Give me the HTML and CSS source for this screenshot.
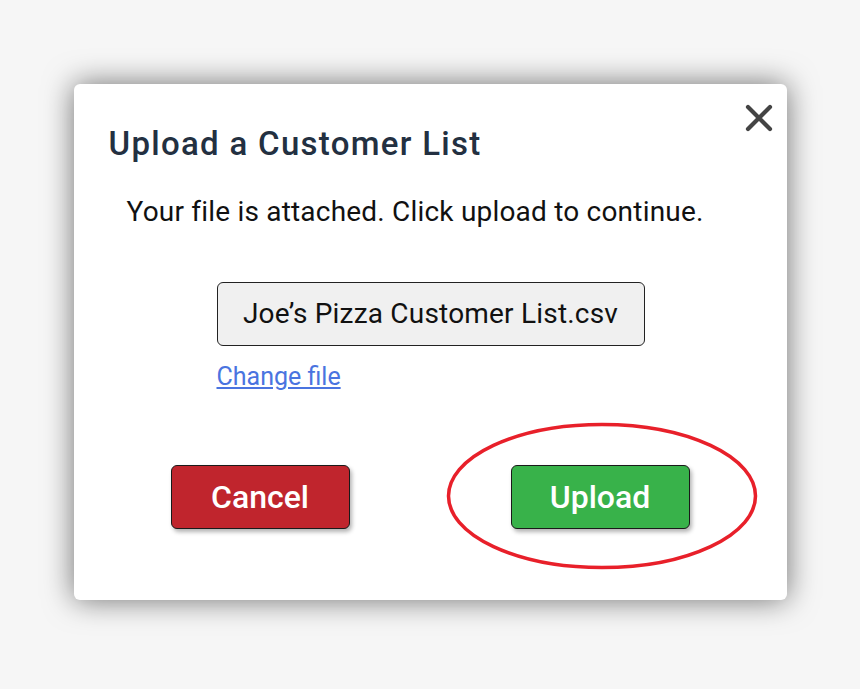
FILE: index.html
```html
<!DOCTYPE html>
<html lang="en">
<head>
    <meta charset="UTF-8">
    <meta name="viewport" content="width=device-width, initial-scale=1.0">
    <title>Upload a Customer List</title>
    <link rel="stylesheet" href="styles.css">
</head>
<body>
    <div class="dialog">
        <button class="close" aria-label="Close">
            <svg width="28" height="28" viewBox="0 0 28 28">
                <path d="M3 3 L25 25 M25 3 L3 25" stroke="#444" stroke-width="4.2" stroke-linecap="round"/>
            </svg>
        </button>

        <h1>Upload a Customer List</h1>
        <p class="message">Your file is attached. Click upload to continue.</p>

        <div class="file-area">
            <div class="file-name">Joe’s Pizza Customer List.csv</div>
            <a href="#" class="change-file">Change file</a>
        </div>

        <div class="actions">
            <button class="btn cancel">Cancel</button>
            <div class="highlight">
                <button class="btn upload">Upload</button>
                <svg class="ring" width="314" height="150" viewBox="0 0 314 150">
                    <ellipse cx="157" cy="75" rx="153.5" ry="71.5" fill="none" stroke="#e8202a" stroke-width="3.5"/>
                </svg>
            </div>
        </div>
    </div>
</body>
</html>
```

FILE: styles.css
```css
body {
    font-family: Roboto, "Noto Sans", sans-serif;
    background-color: #f6f6f6;
    margin: 0;
    padding: 0;
    display: flex;
    align-items: center;
    justify-content: center;
    min-height: 100vh;
}

.dialog {
    position: relative;
    box-sizing: border-box;
    width: 713px;
    height: 516px;
    margin-top: -5px;
    background-color: white;
    border-radius: 6px;
    box-shadow: 0 0 30px rgba(0, 0, 0, 0.55);
    padding: 38px 0 0 35px;
}

.close {
    position: absolute;
    top: 20px;
    right: 14px;
    background: none;
    border: none;
    padding: 0;
    cursor: pointer;
}

h1 {
    margin: 0;
    font-size: 33px;
    font-weight: 500;
    line-height: 44px;
    letter-spacing: 1.3px;
    color: #233041;
}

.message {
    margin: 28px 0 0 18px;
    font-size: 28px;
    line-height: 36px;
    letter-spacing: 0.2px;
    color: #111;
}

.file-area {
    margin: 52px 0 0 108px;
    width: 428px;
}

.file-name {
    box-sizing: border-box;
    height: 64px;
    background-color: #f0f0f0;
    border: 1.5px solid #222;
    border-radius: 6px;
    font-size: 28px;
    line-height: 61px;
    letter-spacing: 0.2px;
    text-align: center;
    color: #111;
}

.change-file {
    display: block;
    width: fit-content;
    margin-top: 16px;
    font-size: 25px;
    line-height: 30px;
    color: #4a74e0;
}

.actions {
    display: flex;
    align-items: center;
    margin: 73px 0 0 62px;
}

.btn {
    width: 179px;
    height: 64px;
    border: 1.5px solid #1a1a1a;
    border-radius: 6px;
    color: white;
    font-family: Roboto, sans-serif;
    font-size: 32px;
    font-weight: 500;
    box-shadow: 2px 3px 4px rgba(0, 0, 0, 0.3);
    cursor: pointer;
}

.cancel {
    background-color: #c0252d;
}

.highlight {
    position: relative;
    margin-left: 161px;
}

.upload {
    background-color: #38b24a;
}

.ring {
    position: absolute;
    left: -66px;
    top: -44px;
    pointer-events: none;
}
```
